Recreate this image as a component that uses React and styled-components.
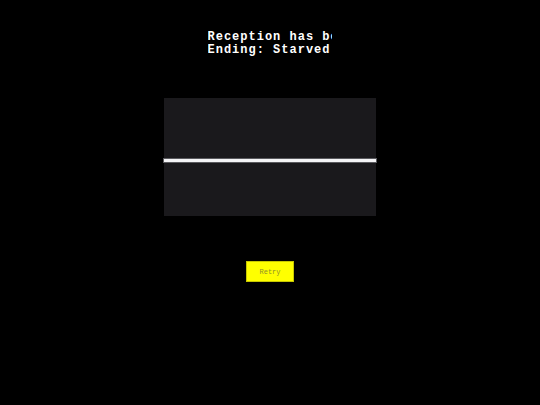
import React from 'react'
import styled, { createGlobalStyle } from "styled-components"

const GlobalStyle = createGlobalStyle`
    html, body {
        margin: 0;
        padding: 0;
        background: #000;
    }
    body {
        width: 540px;
        height: 405px;
        overflow: hidden;
    }
`;

const Screen = styled.div`
    display: flex;
    flex-direction: column;
    align-items: center;
    width: 540px;
    height: 405px;
    background: #000;
    padding-top: 31px;
    box-sizing: border-box;
`;

const Message = styled.div`
    width: 124px;
    height: 26px;
    margin-right: 1px;
    overflow: hidden;
    white-space: nowrap;
    color: #fff;
    font-family: "Liberation Mono", "Courier New", monospace;
    font-weight: bold;
    font-size: 12px;
    letter-spacing: 1px;
    line-height: 12.5px;
    text-align: left;
`;

const Line = styled.div`
    display: block;
`;

const Monitor = styled.div`
    display: flex;
    flex-direction: column;
    width: 212px;
    height: 118px;
    margin-top: 41px;
    margin-right: 1px;
    padding-top: 61px;
    box-sizing: border-box;
    background: #1a191c;
`;

const Flatline = styled.div`
    height: 3px;
    background: #f4f4f6;
    box-shadow: 0 0 0 1px #5a5a5e;
`;

const RetryButton = styled.button`
    margin-top: 45px;
    width: 48px;
    height: 21px;
    padding: 0;
    background: #ffff00;
    border: 1px solid #c8c800;
    color: #8f8f2a;
    font-family: "Liberation Mono", "Courier New", monospace;
    font-size: 7px;
    cursor: pointer;
`;

const App = () => {
  return (
    <>
        <GlobalStyle />
        <Screen>
            <Message>
                <Line>Reception has been lost.</Line>
                <Line>Ending: Starved</Line>
            </Message>
            <Monitor>
                <Flatline />
            </Monitor>
            <RetryButton type='button'>Retry</RetryButton>
        </Screen>
    </>
  )
}

export default App
